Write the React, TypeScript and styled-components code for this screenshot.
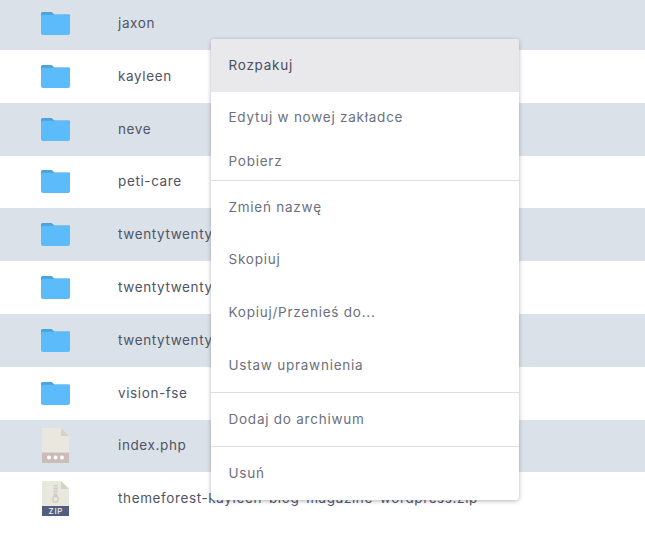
import React from "react";
import styled, { createGlobalStyle } from "styled-components";

const GlobalStyle = createGlobalStyle`
  html, body {
    margin: 0;
    padding: 0;
    background: #fff;
    overflow: hidden;
  }
  body {
    font-family: "Inter", "Liberation Sans", sans-serif;
  }
`;

const Page = styled.div`
  position: relative;
  width: 645px;
  height: 541px;
  overflow: hidden;
`;
const FileList = styled.ul`
  list-style: none;
  margin: -2.8px 0 0;
  padding: 0;
`;
const Row = styled.li<{ $shaded: boolean }>`
  display: flex;
  align-items: center;
  height: 52.8px;
  background-color: ${(props) => (props.$shaded ? "#dbe1e9" : "#fff")};
`;
const IconCell = styled.div`
  width: 118px;
  flex-shrink: 0;
  display: flex;
  justify-content: center;
  padding-right: 7px;
  box-sizing: border-box;
`;
const FileName = styled.span`
  font-size: 13.5px;
  letter-spacing: 0.62px;
  color: #4f5464;
  white-space: nowrap;
  margin-bottom: 1px;
`;
const Menu = styled.div`
  position: absolute;
  left: 211px;
  top: 39px;
  width: 308px;
  background: #fff;
  border-radius: 4px;
  box-shadow: 0 1px 4px rgba(60, 64, 80, 0.4);
  overflow: hidden;
`;
const MenuItem = styled.div<{ $height: number; $active?: boolean }>`
  display: flex;
  align-items: center;
  height: ${(props) => props.$height}px;
  padding: 0 0 1px 17.5px;
  box-sizing: border-box;
  font-size: 13.5px;
  letter-spacing: 0.76px;
  color: ${(props) => (props.$active ? "#4a4e5c" : "#6c707c")};
  background-color: ${(props) => (props.$active ? "#e9e9eb" : "#fff")};
`;
const Divider = styled.div`
  height: 1px;
  background-color: #dfdfe2;
`;

const FolderIcon = () => (
  <svg width="29" height="23" viewBox="0 0 29 23">
    <path
      d="M1.5 0h9l3 2.5H28a1 1 0 0 1 1 1V8H0V1.5A1.5 1.5 0 0 1 1.5 0z"
      fill="#4aa3db"
    />
    <path
      d="M2 2.8h25.5a1.5 1.5 0 0 1 1.5 1.5V21a2 2 0 0 1-2 2H2a2 2 0 0 1-2-2V4.8a2 2 0 0 1 2-2z"
      fill="#5cbbfb"
    />
  </svg>
);

const PhpIcon = () => (
  <svg width="27" height="35" viewBox="0 0 27 35">
    <path d="M0 0h19l8 8v27H0z" fill="#e9e8df" />
    <path d="M19 0l8 8h-8z" fill="#d4d3c6" />
    <rect x="0" y="24.5" width="27" height="10.5" fill="#cabdb9" />
    <circle cx="7" cy="29.5" r="2" fill="#fff" />
    <circle cx="13.5" cy="29.5" r="2" fill="#fff" />
    <circle cx="20" cy="29.5" r="2" fill="#fff" />
  </svg>
);

const ZipIcon = () => (
  <svg width="27" height="35" viewBox="0 0 27 35">
    <path d="M0 0h19l8 8v27H0z" fill="#e9e8df" />
    <path d="M19 0l8 8h-8z" fill="#d4d3c6" />
    <path d="M11.5 4h4v11h-4z" fill="#cfcdc4" />
    <path d="M11.5 6h4M11.5 9h4M11.5 12h4" stroke="#e9e8df" strokeWidth="1" />
    <rect x="11" y="15.5" width="5" height="5.5" rx="1.5" fill="none" stroke="#cfcdc4" strokeWidth="1.4" />
    <rect x="0" y="25" width="27" height="10" fill="#525e7e" />
    <text x="13.9" y="33" textAnchor="middle" fontSize="8" fontWeight="500" letterSpacing="0.8" fontFamily="Inter, sans-serif" fill="#f2f3f6">
      ZIP
    </text>
  </svg>
);

const files = [
  { name: "jaxon", icon: <FolderIcon /> },
  { name: "kayleen", icon: <FolderIcon /> },
  { name: "neve", icon: <FolderIcon /> },
  { name: "peti-care", icon: <FolderIcon /> },
  { name: "twentytwentyone", icon: <FolderIcon /> },
  { name: "twentytwentythree", icon: <FolderIcon /> },
  { name: "twentytwentytwo", icon: <FolderIcon /> },
  { name: "vision-fse", icon: <FolderIcon /> },
  { name: "index.php", icon: <PhpIcon /> },
  { name: "themeforest-kayleen-blog-magazine-wordpress.zip", icon: <ZipIcon /> },
];

const App = () => {
  return (
    <Page>
      <GlobalStyle />
      <FileList>
        {files.map((file, index) => (
          <Row key={file.name} $shaded={index % 2 === 0}>
            <IconCell>{file.icon}</IconCell>
            <FileName>{file.name}</FileName>
          </Row>
        ))}
      </FileList>
      <Menu>
        <MenuItem $height={53} $active>
          Rozpakuj
        </MenuItem>
        <MenuItem $height={50}>Edytuj w nowej zakładce</MenuItem>
        <MenuItem $height={38}>Pobierz</MenuItem>
        <Divider />
        <MenuItem $height={52}>Zmień nazwę</MenuItem>
        <MenuItem $height={53}>Skopiuj</MenuItem>
        <MenuItem $height={53}>Kopiuj/Przenieś do...</MenuItem>
        <MenuItem $height={53}>Ustaw uprawnienia</MenuItem>
        <Divider />
        <MenuItem $height={53}>Dodaj do archiwum</MenuItem>
        <Divider />
        <MenuItem $height={53}>Usuń</MenuItem>
      </Menu>
    </Page>
  );
};

export default App;
